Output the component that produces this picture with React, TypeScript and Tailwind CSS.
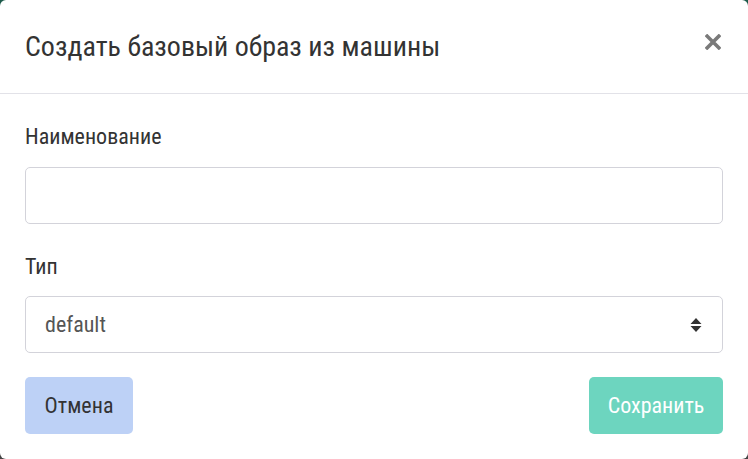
import React from "react";

export default function App() {
  return (
    <div className="h-[459px] w-[748px] bg-gradient-to-b from-[#1d5b4b] to-[#444444] font-['Roboto_Condensed','Roboto',sans-serif]">
      <div className="h-full w-full rounded-[6px] bg-white flex flex-col">
        <div className="h-[94px] flex items-center justify-between px-[25px] border-b border-[#e2e2e8]">
          <h2 className="text-[28px] font-normal text-[#333] leading-none pt-[1px]">Создать базовый образ из машины</h2>
          <button className="mr-[2px] mb-[10px]">
            <svg width="16" height="16" viewBox="0 0 16 16">
              <path d="M2.2 2.2 L13.8 13.8 M13.8 2.2 L2.2 13.8" stroke="#7a7a7a" strokeWidth="3.6" strokeLinecap="square" />
            </svg>
          </button>
        </div>
        <div className="px-[25px] pt-[32px] flex flex-col">
          <label className="text-[22px] text-[#333] leading-none h-[22px]">Наименование</label>
          <input className="mt-[19px] h-[57px] rounded-[5px] border border-[#d3d3da] px-[19px] outline-none" />
          <label className="mt-[32px] text-[22px] text-[#333] leading-none h-[22px]">Тип</label>
          <div className="mt-[18px] h-[57px] rounded-[5px] border border-[#d3d3da] px-[19px] flex items-center justify-between">
            <span className="text-[22px] text-[#555]">default</span>
            <svg width="12" height="16" viewBox="0 0 12 16" className="mr-[1px]">
              <path d="M6 1 L11.5 7 H0.5 Z M6 15 L11.5 9 H0.5 Z" fill="#333" />
            </svg>
          </div>
          <div className="mt-[24px] flex justify-between">
            <button className="h-[57px] w-[108px] rounded-[5px] bg-[#bdd1f6] text-[22px] text-[#333]">Отмена</button>
            <button className="h-[57px] w-[134px] rounded-[5px] bg-[#6dd5bf] text-[22px] text-white">Сохранить</button>
          </div>
        </div>
      </div>
    </div>
  );
}
